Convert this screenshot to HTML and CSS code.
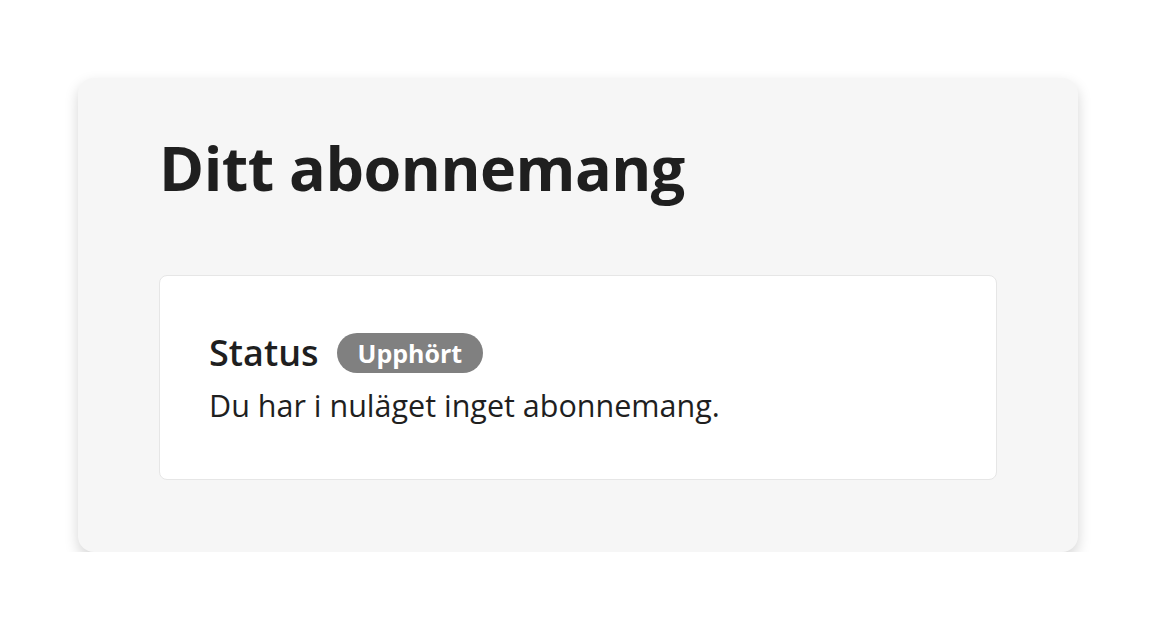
FILE: index.html
```html
<!DOCTYPE html>
<html lang="sv">
<head>
    <meta charset="UTF-8">
    <meta name="viewport" content="width=device-width, initial-scale=1.0">
    <title>Ditt abonnemang</title>
    <link rel="stylesheet" href="styles.css">
</head>
<body>
    <main class="page">
        <section class="subscription">
            <h1>Ditt abonnemang</h1>
            <div class="status-card">
                <div class="status-row">
                    <h2>Status</h2>
                    <span class="badge">Upphört</span>
                </div>
                <p>Du har i nuläget inget abonnemang.</p>
            </div>
        </section>
    </main>
</body>
</html>
```

FILE: styles.css
```css
body { margin: 0; background: #fff; font-family: "Open Sans", "Noto Sans", sans-serif; color: #1f1f1f; }
.page { padding-top: 78px; }
.subscription { width: 1000px; box-sizing: border-box; margin: 0 auto; padding: 48px 81px 72px; background: #f6f6f6; border-radius: 16px; box-shadow: 0 6px 14px rgba(0,0,0,0.17); }
.subscription h1 { margin: 0 0 65px; font-size: 61px; line-height: 84px; font-weight: 700; letter-spacing: -0.5px; }
.status-card { background: #fff; border: 1px solid #e6e6e6; border-radius: 8px; padding: 51px 49px 52px; }
.status-row { display: flex; align-items: center; gap: 18px; }
.status-row h2 { margin: 0; font-size: 36px; line-height: 52px; font-weight: 600; }
.badge { display: inline-block; background: #808080; color: #fff; font-weight: 700; font-size: 25px; line-height: 40px; padding: 0 21px; border-radius: 20px; }
.status-card p { margin: 4px 0 0; font-size: 30.5px; line-height: 44px; }
```
